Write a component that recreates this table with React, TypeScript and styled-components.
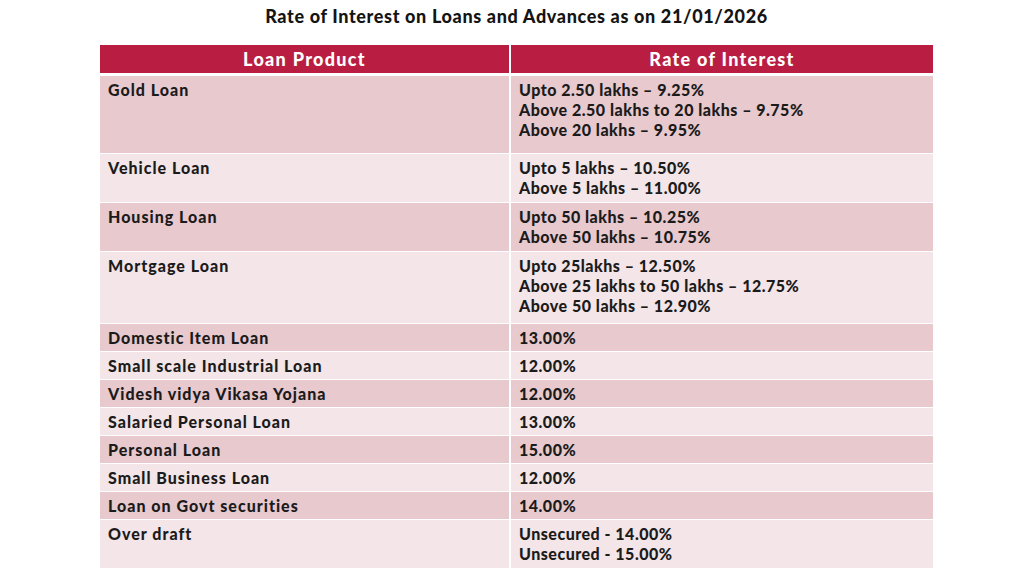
import styled, { createGlobalStyle } from 'styled-components';

const GlobalStyle = createGlobalStyle`
    html, body {
        margin: 0;
        padding: 0;
        background: #ffffff;
    }
    body {
        font-family: Lato, 'Open Sans', 'Liberation Sans', sans-serif;
        color: #1b1b1b;
    }
`;

const Slide = styled.div`
    width: 1024px;
    height: 576px;
    box-sizing: border-box;
    padding-left: 9px;
    display: flex;
    flex-direction: column;
    align-items: center;
    overflow: hidden;
`;

const Title = styled.h1`
    margin: 5px 0 0;
    height: 40px;
    line-height: 22px;
    font-size: 18px;
    font-weight: 900;
    letter-spacing: 0.65px;
    color: #141414;
    text-align: center;
`;

const Table = styled.div`
    width: 833px;
    display: grid;
    grid-template-columns: 409px 422px;
    column-gap: 2px;
`;

const HeadCell = styled.div`
    height: 28px;
    margin-bottom: 3px;
    background: #b91e42;
    color: #ffffff;
    font-size: 18px;
    font-weight: 900;
    letter-spacing: 1.3px;
    line-height: 29px;
    text-align: center;
`;

const Cell = styled.div<{ $dark: boolean; $h: number; $wide?: boolean }>`
    height: ${(p) => p.$h}px;
    margin-bottom: 1px;
    box-sizing: border-box;
    padding: 4px 8px 0;
    background: ${(p) => (p.$dark ? '#e8c9ce' : '#f3e5e8')};
    font-size: 16px;
    font-weight: 900;
    letter-spacing: ${(p) => (p.$wide ? '1px' : '0.5px')};
    line-height: 20px;
`;

type Row = { product: string; rates: string[]; h: number };

const rows: Row[] = [
    {
        product: 'Gold Loan',
        rates: ['Upto 2.50 lakhs – 9.25%', 'Above 2.50 lakhs to 20 lakhs – 9.75%', 'Above 20 lakhs – 9.95%'],
        h: 77,
    },
    { product: 'Vehicle Loan', rates: ['Upto 5 lakhs – 10.50%', 'Above 5 lakhs – 11.00%'], h: 48 },
    { product: 'Housing Loan', rates: ['Upto 50 lakhs – 10.25%', 'Above 50 lakhs – 10.75%'], h: 48 },
    {
        product: 'Mortgage Loan',
        rates: ['Upto 25lakhs – 12.50%', 'Above 25 lakhs to 50 lakhs – 12.75%', 'Above 50 lakhs – 12.90%'],
        h: 71,
    },
    { product: 'Domestic Item Loan', rates: ['13.00%'], h: 27 },
    { product: 'Small scale Industrial Loan', rates: ['12.00%'], h: 27 },
    { product: 'Videsh vidya Vikasa Yojana', rates: ['12.00%'], h: 27 },
    { product: 'Salaried Personal Loan', rates: ['13.00%'], h: 27 },
    { product: 'Personal Loan', rates: ['15.00%'], h: 27 },
    { product: 'Small Business Loan', rates: ['12.00%'], h: 27 },
    { product: 'Loan on Govt securities', rates: ['14.00%'], h: 27 },
    { product: 'Over draft', rates: ['Unsecured - 14.00%', 'Unsecured - 15.00%'], h: 48 },
];

function App() {
    return (
        <Slide>
            <GlobalStyle />
            <Title>Rate of Interest on Loans and Advances as on 21/01/2026</Title>
            <Table>
                <HeadCell>Loan Product</HeadCell>
                <HeadCell>Rate of Interest</HeadCell>
                {rows.map((r, i) => (
                    <>
                        <Cell key={`p${i}`} $dark={i % 2 === 0} $h={r.h} $wide>
                            {r.product}
                        </Cell>
                        <Cell key={`r${i}`} $dark={i % 2 === 0} $h={r.h}>
                            {r.rates.map((t, j) => (
                                <div key={j}>{t}</div>
                            ))}
                        </Cell>
                    </>
                ))}
            </Table>
        </Slide>
    );
}

export default App;
